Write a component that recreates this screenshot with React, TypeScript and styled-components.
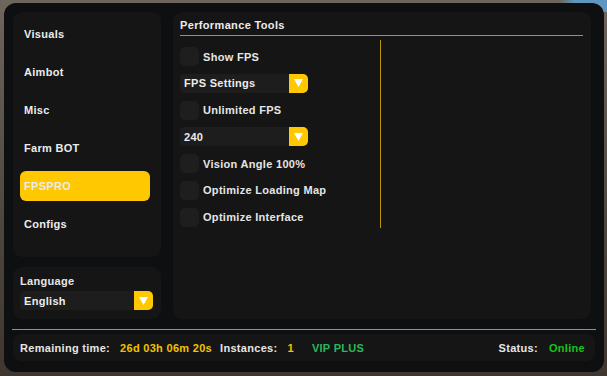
import React from "react";
import styled, { createGlobalStyle } from "styled-components";

const Global = createGlobalStyle`
  html, body { margin: 0; padding: 0; }
  body {
    width: 607px;
    height: 376px;
    overflow: hidden;
    background:
      linear-gradient(90deg, transparent 0 560px, #5f97c0 575px) top / 100% 12px no-repeat,
      linear-gradient(180deg, #6e665c 0%, #4d463f 60%, #3f372f 100%);
    font-family: "Liberation Sans", Arial, sans-serif;
  }
  #root { padding: 3px 3px 0 4px; }
`;

const Window = styled.div`
  width: 600px;
  height: 369px;
  box-sizing: border-box;
  background: #0e0f10;
  border-radius: 12px;
  padding: 9px 9px 0 9px;
  display: flex;
  flex-direction: column;
`;

const Top = styled.div`
  display: flex;
  gap: 12px;
  height: 307px;
`;

const LeftCol = styled.div`
  width: 148px;
  display: flex;
  flex-direction: column;
  gap: 10px;
`;

const Panel = styled.div`
  background: #151515;
  border-radius: 9px;
  box-sizing: border-box;
`;

const Sidebar = styled(Panel)`
  height: 245px;
  padding: 7px 11px 0 7px;
  display: flex;
  flex-direction: column;
  gap: 8px;
`;

const NavItem = styled.div<{ $active?: boolean }>`
  height: 30px;
  display: flex;
  align-items: center;
  padding-left: 4px;
  border-radius: 6px;
  background: ${(p) => (p.$active ? "#ffc800" : "transparent")};
  color: #ececec;
  font-size: 11px;
  font-weight: 700;
  letter-spacing: 0.3px;
`;

const LangPanel = styled(Panel)`
  flex: 1;
  padding: 8px 8px 0 7px;
  display: flex;
  flex-direction: column;
  gap: 4px;
`;

const Label = styled.div`
  color: #e6e6e6;
  font-size: 11px;
  font-weight: 700;
  letter-spacing: 0.3px;
  line-height: 12px;
`;

const Main = styled(Panel)`
  width: 418px;
  padding: 7px 8px 0 7px;
  display: flex;
  flex-direction: column;
`;

const Title = styled.div`
  color: #ececec;
  font-size: 11px;
  font-weight: 700;
  letter-spacing: 0.35px;
  height: 16px;
  line-height: 12px;
  border-bottom: 1px solid #b8960a;
`;

const Content = styled.div`
  display: flex;
  padding-top: 11px;
`;

const Column = styled.div`
  width: 200px;
  display: flex;
  flex-direction: column;
  gap: 7.8px;
`;

const Divider = styled.div`
  width: 1px;
  height: 188px;
  margin-top: -7px;
  background: #b8960a;
`;

const Row = styled.div`
  display: flex;
  align-items: center;
  gap: 4px;
  height: 19px;
`;

const Box = styled.div`
  width: 19px;
  height: 19px;
  border-radius: 5px;
  background: #1e1e1e;
`;

const Select = styled.div<{ $w: number }>`
  width: ${(p) => p.$w}px;
  height: 19px;
  display: flex;
  background: #1d1d1d;
  border-radius: 4px;
`;

const SelectText = styled.div`
  flex: 1;
  padding-left: 4px;
  display: flex;
  align-items: center;
  color: #ececec;
  font-size: 11px;
  font-weight: 700;
  letter-spacing: 0.3px;
`;

const Arrow = styled.div`
  width: 19px;
  height: 19px;
  background: #ffc800;
  border-radius: 0 5px 5px 0;
  display: flex;
  align-items: center;
  justify-content: center;
`;

const Line = styled.div`
  height: 1px;
  background: #b8960a;
  margin: 10px 0 4px -1px;
  width: 584px;
`;

const Footer = styled(Panel)`
  width: 582px;
  height: 27px;
  border-radius: 8px;
  padding: 0 10px 0 7px;
  display: flex;
  align-items: center;
  font-size: 11px;
  font-weight: 700;
  letter-spacing: 0.3px;
`;

const FText = styled.span<{ $c?: string; $ml?: number }>`
  color: ${(p) => p.$c || "#e6e6e6"};
  margin-left: ${(p) => p.$ml || 0}px;
  white-space: nowrap;
`;

const Spacer = styled.div`
  flex: 1;
`;

const Tri = () => (
  <svg width="11" height="10" viewBox="0 0 11 10">
    <path d="M1 1 H10 L5.5 9 Z" fill="#ffffff" />
  </svg>
);

const Dropdown = ({ w, text }: { w: number; text: string }) => (
  <Select $w={w}>
    <SelectText>{text}</SelectText>
    <Arrow>
      <Tri />
    </Arrow>
  </Select>
);

const Check = ({ label }: { label: string }) => (
  <Row>
    <Box />
    <Label>{label}</Label>
  </Row>
);

export default function App() {
  const nav = ["Visuals", "Aimbot", "Misc", "Farm BOT", "FPSPRO", "Configs"];
  return (
    <>
      <Global />
      <Window>
        <Top>
          <LeftCol>
            <Sidebar>
              {nav.map((n) => (
                <NavItem key={n} $active={n === "FPSPRO"}>
                  {n}
                </NavItem>
              ))}
            </Sidebar>
            <LangPanel>
              <Label>Language</Label>
              <Dropdown w={133} text="English" />
            </LangPanel>
          </LeftCol>
          <Main>
            <Title>Performance Tools</Title>
            <Content>
              <Column>
                <Check label="Show FPS" />
                <Dropdown w={128} text="FPS Settings" />
                <Check label="Unlimited FPS" />
                <Dropdown w={128} text="240" />
                <Check label="Vision Angle 100%" />
                <Check label="Optimize Loading Map" />
                <Check label="Optimize Interface" />
              </Column>
              <Divider />
            </Content>
          </Main>
        </Top>
        <Line />
        <Footer>
          <FText>Remaining time:</FText>
          <FText $c="#f2c200" $ml={10}>26d 03h 06m 20s</FText>
          <FText $ml={8}>Instances:</FText>
          <FText $c="#f2c200" $ml={10}>1</FText>
          <FText $c="#2bb85a" $ml={18}>VIP PLUS</FText>
          <Spacer />
          <FText>Status:</FText>
          <FText $c="#18c21c" $ml={11}>Online</FText>
        </Footer>
      </Window>
    </>
  );
}
